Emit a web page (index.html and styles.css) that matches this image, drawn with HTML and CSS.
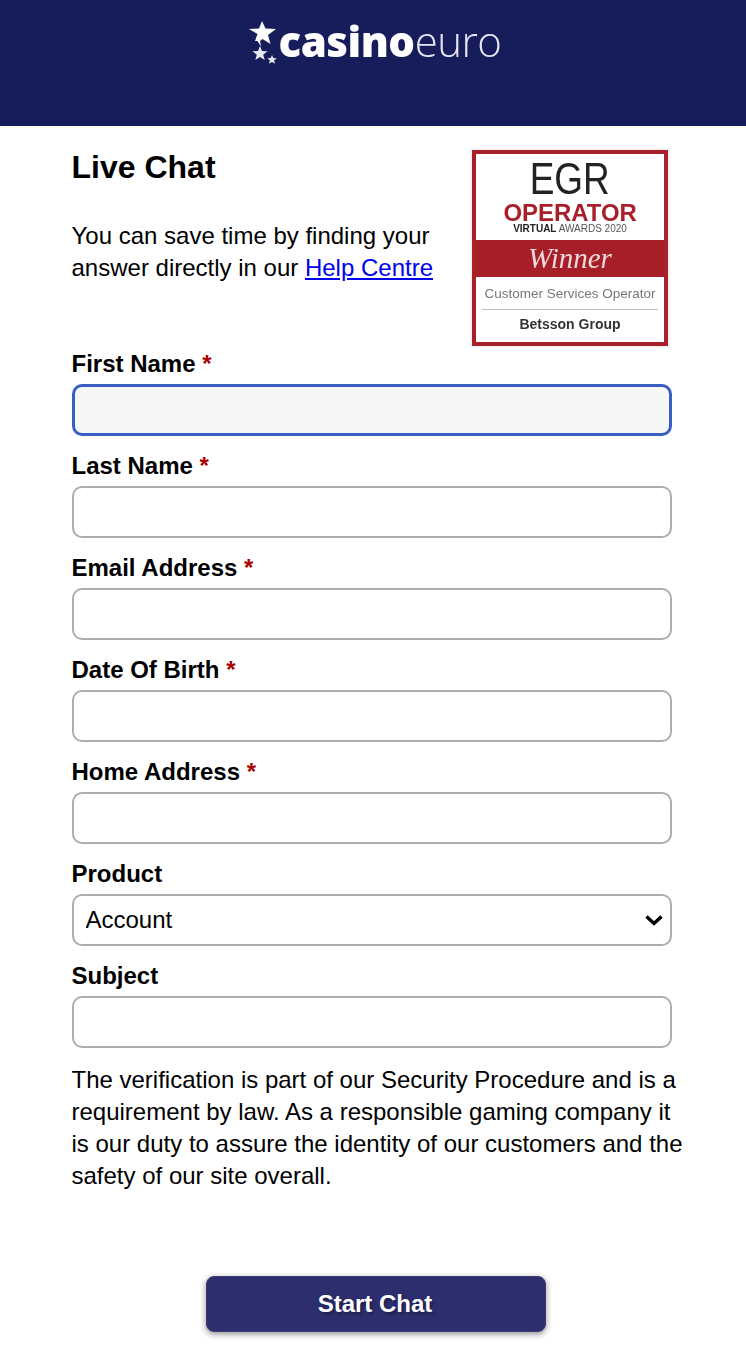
FILE: index.html
```html
<!DOCTYPE html>
<html lang="en">
<head>
<meta charset="utf-8">
<title>Live Chat</title>
<link rel="stylesheet" href="styles.css">
</head>
<body>
<header class="site-header">
  <div class="logo">
    <svg class="logo-stars" width="28" height="46" viewBox="0 0 28 46" aria-hidden="true">
      <path fill="#fff" d="M13 1l3.500 7.500 10.500.5-8 6 2.500 9-8-5-2.500 2 1 5.500-3.500-5.500-2.500 0 2.500-7L0 9l10-.5z"/>
      <path fill="#fff" opacity=".9" d="M11 26l2 5 5.500.3-4.300 3.400 1.500 5.300-4.700-3-4.700 3 1.500-5.300-4.300-3.400L9 31z"/>
      <path fill="#fff" opacity=".9" d="M23 35l1.300 3.100 3.400.2-2.600 2.100.9 3.300-3-1.800-3 1.800.9-3.300-2.600-2.100 3.400-.2z"/>
    </svg>
    <span class="logo-text"><b class="logo-bold">casino</b><span class="logo-light">euro</span></span>
  </div>
</header>
<main class="page">
  <section class="intro">
    <div class="intro-copy">
      <h1 class="title">Live Chat</h1>
      <p class="lead">You can save time by finding your answer directly in our <a href="#">Help Centre</a></p>
    </div>
    <aside class="badge">
      <div class="badge-frame">
        <div class="badge-egr">EGR</div>
        <div class="badge-operator">OPERATOR</div>
        <div class="badge-virtual"><b>VIRTUAL</b> AWARDS 2020</div>
        <div class="badge-winner">Winner</div>
        <div class="badge-category">Customer Services Operator</div>
        <div class="badge-group">Betsson Group</div>
      </div>
    </aside>
  </section>
  <form class="form">
    <div class="field">
      <label class="label" for="first">First Name <span class="req">*</span></label>
      <input class="control control-focus" id="first" type="text">
    </div>
    <div class="field">
      <label class="label" for="last">Last Name <span class="req">*</span></label>
      <input class="control" id="last" type="text">
    </div>
    <div class="field">
      <label class="label" for="email">Email Address <span class="req">*</span></label>
      <input class="control" id="email" type="text">
    </div>
    <div class="field">
      <label class="label" for="dob">Date Of Birth <span class="req">*</span></label>
      <input class="control" id="dob" type="text">
    </div>
    <div class="field">
      <label class="label" for="home">Home Address <span class="req">*</span></label>
      <input class="control" id="home" type="text">
    </div>
    <div class="field">
      <label class="label" for="product">Product</label>
      <div class="select-wrap">
        <select class="control control-select" id="product"><option>Account</option></select>
        <svg class="select-arrow" width="20" height="12" viewBox="0 0 20 12" aria-hidden="true"><path d="M2.500 2.500L10 9.500l7.500-7" fill="none" stroke="#000" stroke-width="3.400"/></svg>
      </div>
    </div>
    <div class="field field-last">
      <label class="label" for="subject">Subject</label>
      <input class="control" id="subject" type="text">
    </div>
    <p class="note">The verification is part of our Security Procedure and is a requirement by law. As a responsible gaming company it is our duty to assure the identity of our customers and the safety of our site overall.</p>
    <div class="actions">
      <button class="start" type="button">Start Chat</button>
    </div>
  </form>
</main>
</body>
</html>
```

FILE: styles.css
```css
* { box-sizing: border-box; }

html, body { margin: 0; padding: 0; }

body {
  background: #fff;
  color: #000;
  font-family: "Liberation Sans", Arial, sans-serif;
  font-size: 24px;
  line-height: 32px;
}

.site-header {
  height: 126px;
  background: #171c5b;
  display: flex;
  justify-content: center;
  padding: 19px 0 0 4px;
}

.logo {
  display: flex;
  align-items: flex-start;
  gap: 2px;
  height: 48px;
  filter: blur(0.7px);
}

.logo-stars { margin-top: 1px; }

.logo-text {
  margin-top: -3px;
  font-family: "Open Sans", sans-serif;
  font-size: 42px;
  line-height: 50px;
  color: #fff;
  letter-spacing: -0.5px;
}

.logo-bold { font-weight: 800; }

.logo-light { font-weight: 300; color: #e6e7f2; }

.page { padding: 0 56px 0 72px; }

.intro {
  display: flex;
  justify-content: space-between;
  height: 222px;
  padding: 22px 20px 0 0;
}

.intro-copy { width: 380px; margin-left: -0.5px; }

.title {
  margin: 0;
  font-size: 32px;
  line-height: 38px;
  font-weight: 700;
}

.lead { margin: 34px 0 0; }

.badge {
  width: 200px;
  height: 200px;
  padding: 2px;
  background: #f1f1f1;
}

.badge-frame {
  height: 196px;
  border: 4px solid #a91f2a;
  background: #fff;
  display: flex;
  flex-direction: column;
  align-items: center;
  overflow: hidden;
  filter: blur(0.7px);
}

.badge-egr {
  height: 46px;
  margin-top: 4px;
  font-size: 44px;
  line-height: 41px;
  color: #222;
  transform: scaleX(0.84);
}

.badge-operator {
  height: 18px;
  font-size: 23px;
  line-height: 18px;
  font-weight: 700;
  color: #a91f2a;
  transform: scaleX(1.04);
}

.badge-virtual {
  height: 18px;
  font-size: 10px;
  line-height: 13px;
  color: #555;
  white-space: nowrap;
}

.badge-virtual b { color: #222; }

.badge-winner {
  align-self: stretch;
  height: 37px;
  background: #a51e28;
  color: #f1d9db;
  text-align: center;
  font-family: "Liberation Serif", serif;
  font-style: italic;
  font-size: 29px;
  line-height: 37px;
}

.badge-category {
  align-self: stretch;
  height: 33px;
  margin: 0 6px;
  border-bottom: 1px solid #bbb;
  text-align: center;
  font-size: 13.500px;
  line-height: 34px;
  color: #777;
  white-space: nowrap;
}

.badge-group {
  font-size: 14px;
  line-height: 29px;
  font-weight: 700;
  color: #333;
}

.field { margin-bottom: 14px; }

.field-last { margin-bottom: 16px; }

.label {
  display: block;
  margin: 0 0 4px -0.5px;
  font-weight: 700;
  line-height: 32px;
}

.req { color: #a00; }

.control {
  display: block;
  width: 600px;
  height: 52px;
  margin: 0;
  padding: 0 12px;
  border: 2px solid #adadad;
  border-radius: 10px;
  background: #fff;
  color: #000;
  font-family: "Liberation Sans", Arial, sans-serif;
  font-size: 24px;
  outline: none;
}

.control-focus {
  border: 3px solid #3a5fc4;
  background: #f7f7f7;
}

.select-wrap {
  position: relative;
  width: 600px;
}

.control-select {
  appearance: none;
  -webkit-appearance: none;
  padding: 0 12px 2px 11.500px;
}

.select-arrow {
  position: absolute;
  right: 8px;
  top: 20px;
}

.note { margin: 0 0 84px -0.5px; }

.actions {
  display: flex;
  justify-content: flex-start;
  padding: 0 0 20px 134px;
}

.start {
  width: 340px;
  height: 56px;
  padding: 0 2px 0 0;
  border: 1px solid #3d4170;
  border-radius: 8px;
  background: #2d2e6e;
  color: #fff;
  font-family: "Liberation Sans", Arial, sans-serif;
  font-size: 24px;
  font-weight: 700;
  text-shadow: 2px 2px 3px rgba(0, 0, 0, 0.35);
  box-shadow: 0 2px 6px rgba(0, 0, 0, 0.45);
}
```
